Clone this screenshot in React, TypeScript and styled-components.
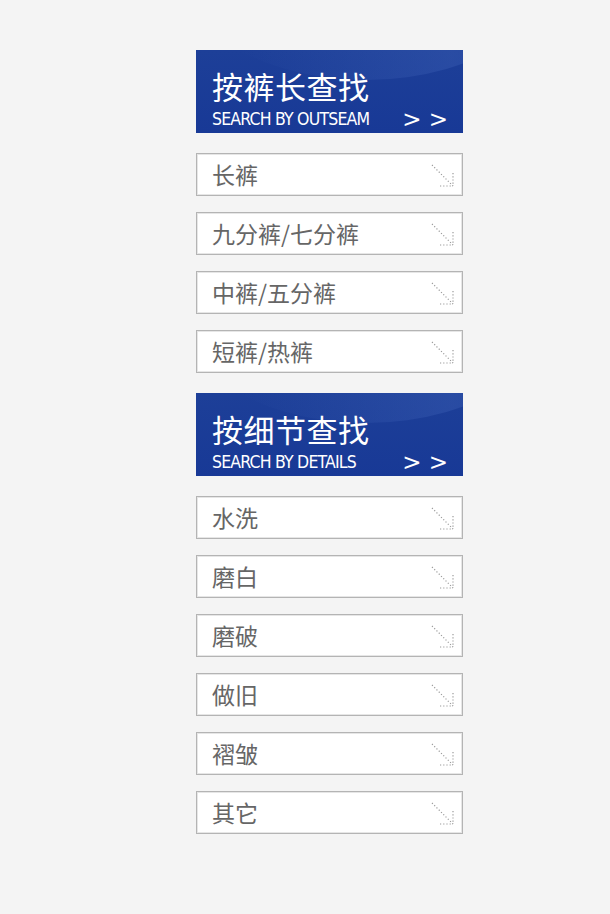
import React from "react";
import styled, { createGlobalStyle } from "styled-components";

const Global = createGlobalStyle`
  html, body { margin: 0; padding: 0; background: #f4f4f4; }
  body { font-family: "Noto Sans CJK SC", "Noto Sans", sans-serif; }
`;

const Page = styled.div`
  display: flex;
  flex-direction: column;
  width: 267px;
  margin-left: 196px;
  padding-top: 50px;
  padding-bottom: 40px;
`;

const Section = styled.section`
  display: flex;
  flex-direction: column;
  gap: 16px;
  margin-bottom: 20px;
`;

const Header = styled.div`
  position: relative;
  overflow: hidden;
  height: 83px;
  margin-bottom: 4px;
  box-sizing: border-box;
  padding: 17px 16px 0 16px;
  background: linear-gradient(180deg, #1d3f98 0%, #183996 100%);
  color: #fff;
  display: flex;
  flex-direction: column;
  &::before {
    content: "";
    position: absolute;
    left: -40px;
    top: -260px;
    width: 420px;
    height: 290px;
    border-radius: 50%;
    background: linear-gradient(90deg, rgba(60, 95, 180, 0) 20%, rgba(60, 95, 180, 0.4) 70%, rgba(50, 85, 170, 0.25) 100%);
  }
`;

const Title = styled.div`
  position: relative;
  font-family: "Noto Sans CJK SC", sans-serif;
  font-size: 31px;
  line-height: 38px;
  letter-spacing: 0.5px;
`;

const SubRow = styled.div`
  position: relative;
  display: flex;
  justify-content: space-between;
  align-items: center;
  margin-top: 2px;
`;

const Sub = styled.div`
  font-family: "DejaVu Sans", sans-serif;
  font-stretch: condensed;
  font-size: 17.5px;
  line-height: 24px;
  letter-spacing: -0.8px;
`;

const More = styled.div`
  font-family: "DejaVu Sans", sans-serif;
  font-size: 23px;
  line-height: 24px;
  letter-spacing: 0px;
  margin-right: -1px;
`;

const Item = styled.a`
  display: flex;
  align-items: center;
  justify-content: space-between;
  box-sizing: border-box;
  height: 43px;
  padding: 0 6px 0 15px;
  background: #fff;
  border: 1px solid #b4b4b4;
  box-shadow: inset 0 0 0 1px #e6e6e6;
  color: #666;
  text-decoration: none;
  font-family: "Noto Sans CJK SC", sans-serif;
  font-size: 23px;
  line-height: 1;
`;

const Arrow = () => (
  <svg width="26" height="26" viewBox="0 0 26 26">
    <g fill="none" stroke="#9a9a9a" strokeWidth="1.2" strokeDasharray="1.2 2">
      <path d="M2 3 L23 24" />
      <path d="M23 11 L23 24" />
      <path d="M10 24 L23 24" />
    </g>
  </svg>
);

const groups = [
  {
    title: "按裤长查找",
    sub: "SEARCH BY OUTSEAM",
    items: ["长裤", "九分裤/七分裤", "中裤/五分裤", "短裤/热裤"],
  },
  {
    title: "按细节查找",
    sub: "SEARCH BY DETAILS",
    items: ["水洗", "磨白", "磨破", "做旧", "褶皱", "其它"],
  },
];

export default function App() {
  return (
    <>
      <Global />
      <Page>
        {groups.map((g) => (
          <Section key={g.title}>
            <Header>
              <Title>{g.title}</Title>
              <SubRow>
                <Sub>{g.sub}</Sub>
                <More>&gt; &gt;</More>
              </SubRow>
            </Header>
            {g.items.map((it) => (
              <Item key={it} href="#">
                <span>{it}</span>
                <Arrow />
              </Item>
            ))}
          </Section>
        ))}
      </Page>
    </>
  );
}
